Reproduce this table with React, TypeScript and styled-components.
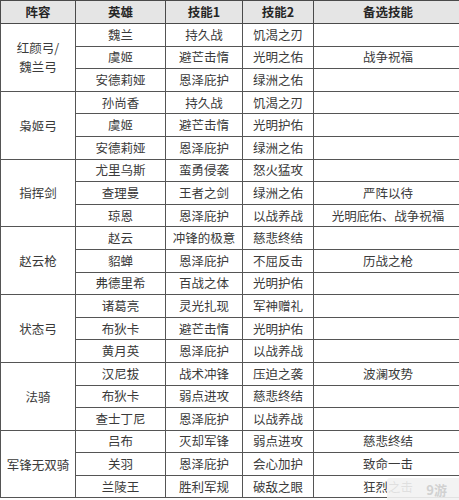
import React from 'react';
import styled, {createGlobalStyle} from 'styled-components';

const GlobalStyle = createGlobalStyle`
    body {
        margin: 0;
        background: #ffffff;
        font-family: "Noto Sans CJK SC", "Noto Sans", sans-serif;
    }
`;

const Page = styled.div`
    position: relative;
    width: 459px;
    height: 500px;
    overflow: hidden;
    background: #ffffff;
`;

const Table = styled.table`
    border-collapse: collapse;
    table-layout: fixed;
    width: 458px;
    color: #3a3a3a;
    font-size: 12.5px;
`;

const HeadCell = styled.th<{w: number}>`
    width: ${p => p.w}px;
    height: 22px;
    padding: 0;
    background: #e5e5e5;
    border: 1px solid #4a4a4a;
    font-weight: 700;
    color: #262626;
    text-align: center;
    line-height: 14px;
`;

const Cell = styled.td<{groupTop?: boolean}>`
    height: 21.6px;
    padding: 0;
    border: 1px solid #555555;
    border-top: 1px solid ${p => (p.groupTop ? '#3e3e3e' : '#5a5a5a')};
    text-align: center;
    line-height: 14px;
    white-space: nowrap;
`;

const NameLine = styled.div`
    line-height: 19px;
`;

const Watermark = styled.div`
    position: absolute;
    right: 0;
    bottom: 0;
    width: 72px;
    height: 22px;
    background: rgba(242, 242, 242, 0.9);
    border-radius: 3px 0 0 0;
    display: flex;
    align-items: center;
    justify-content: flex-end;
    padding-right: 12px;
    box-sizing: border-box;
    color: rgba(205, 205, 205, 0.9);
    font-size: 13px;
    font-weight: 700;
`;

type Row = [string, string, string, string];
type Group = {name: string[]; rows: Row[]};

const groups: Group[] = [
    {
        name: ['红颜弓/', '魏兰弓'],
        rows: [
            ['魏兰', '持久战', '饥渴之刃', ''],
            ['虞姬', '避芒击惰', '光明之佑', '战争祝福'],
            ['安德莉娅', '恩泽庇护', '绿洲之佑', '']
        ]
    },
    {
        name: ['枭姬弓'],
        rows: [
            ['孙尚香', '持久战', '饥渴之刃', ''],
            ['虞姬', '避芒击惰', '光明护佑', ''],
            ['安德莉娅', '恩泽庇护', '绿洲之佑', '']
        ]
    },
    {
        name: ['指挥剑'],
        rows: [
            ['尤里乌斯', '蛮勇侵袭', '怒火猛攻', ''],
            ['查理曼', '王者之剑', '绿洲之佑', '严阵以待'],
            ['琼恩', '恩泽庇护', '以战养战', '光明庇佑、战争祝福']
        ]
    },
    {
        name: ['赵云枪'],
        rows: [
            ['赵云', '冲锋的极意', '慈悲终结', ''],
            ['貂蝉', '恩泽庇护', '不屈反击', '历战之枪'],
            ['弗德里希', '百战之体', '光明护佑', '']
        ]
    },
    {
        name: ['状态弓'],
        rows: [
            ['诸葛亮', '灵光扎现', '军神赠礼', ''],
            ['布狄卡', '避芒击惰', '光明护佑', ''],
            ['黄月英', '恩泽庇护', '以战养战', '']
        ]
    },
    {
        name: ['法骑'],
        rows: [
            ['汉尼拔', '战术冲锋', '压迫之袭', '波澜攻势'],
            ['布狄卡', '弱点进攻', '慈悲终结', ''],
            ['查士丁尼', '恩泽庇护', '以战养战', '']
        ]
    },
    {
        name: ['军锋无双骑'],
        rows: [
            ['吕布', '灭却军锋', '弱点进攻', '慈悲终结'],
            ['关羽', '恩泽庇护', '会心加护', '致命一击'],
            ['兰陵王', '胜利军规', '破敌之眼', '狂烈之击']
        ]
    }
];

const App = () => (
    <Page>
        <GlobalStyle />
        <Table>
            <thead>
                <tr>
                    <HeadCell w={74}>阵容</HeadCell>
                    <HeadCell w={89}>英雄</HeadCell>
                    <HeadCell w={76}>技能1</HeadCell>
                    <HeadCell w={70}>技能2</HeadCell>
                    <HeadCell w={148}>备选技能</HeadCell>
                </tr>
            </thead>
            <tbody>
                {groups.map(group =>
                    group.rows.map((row, i) => (
                        <tr key={group.name.join('') + i}>
                            {i === 0 && (
                                <Cell rowSpan={group.rows.length} groupTop>
                                    {group.name.map((line, j) => (
                                        <NameLine key={j}>{line}</NameLine>
                                    ))}
                                </Cell>
                            )}
                            {row.map((text, k) => (
                                <Cell key={k} groupTop={i === 0}>
                                    {text}
                                </Cell>
                            ))}
                        </tr>
                    ))
                )}
            </tbody>
        </Table>
        <Watermark>9游</Watermark>
    </Page>
);

export default App;
